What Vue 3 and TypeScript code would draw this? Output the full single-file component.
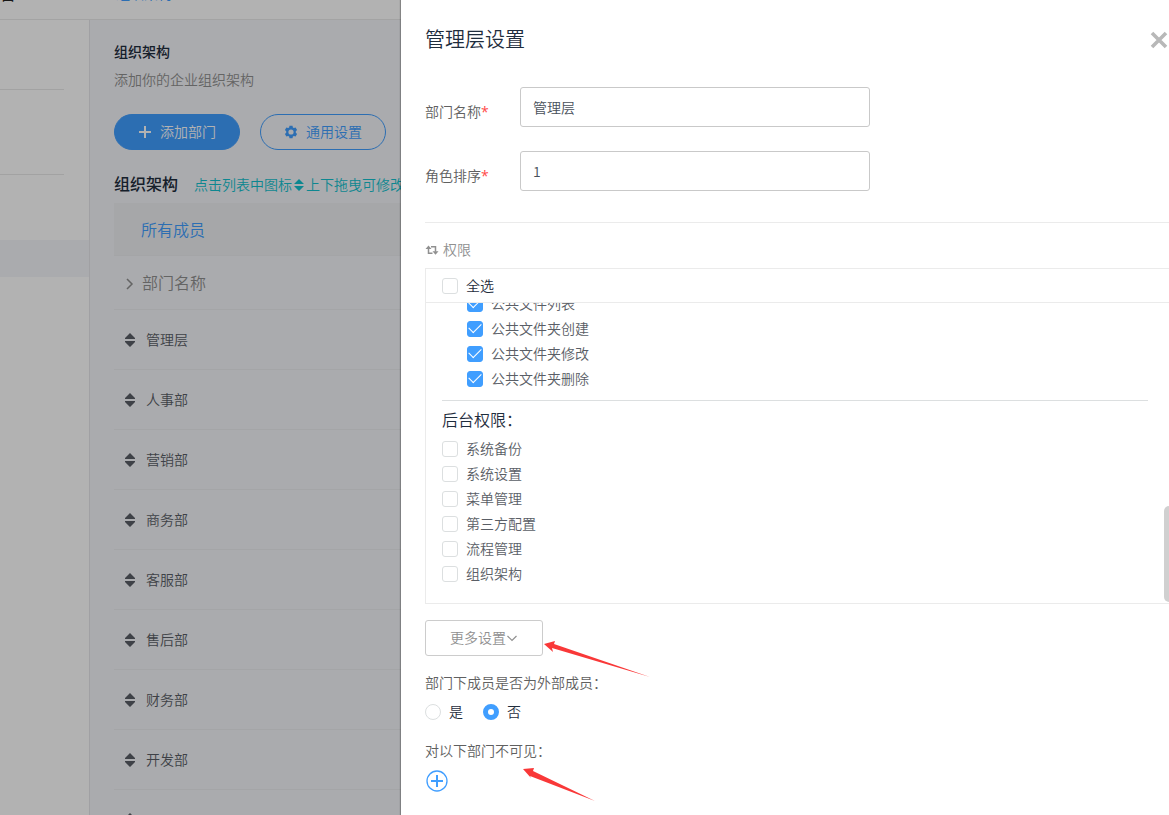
<script setup lang="ts">
import { ref } from 'vue'

interface Permission { name: string; checked: boolean }

const departments = ['管理层', '人事部', '营销部', '商务部', '客服部', '售后部', '财务部', '开发部', '']
const deptName = ref('管理层')
const order = ref('1')
const all = ref(false)
const external = ref('否')
const filePermissions = ref<Permission[]>(
  ['公共文件列表', '公共文件夹创建', '公共文件夹修改', '公共文件夹删除'].map((name) => ({ name, checked: true })),
)
const adminPermissions = ref<Permission[]>(
  ['系统备份', '系统设置', '菜单管理', '第三方配置', '流程管理', '组织架构'].map((name) => ({ name, checked: false })),
)
</script>

<template>
  <div class="app">
    <div class="page">
      <header class="topbar">
        <span class="brand">台</span>
        <a class="tab" href="#">组织架构</a>
      </header>
      <div class="body">
        <nav class="side" aria-label="菜单">
          <div class="side-block first"></div>
          <div class="side-block"></div>
          <div class="side-active"></div>
        </nav>
        <main class="main">
          <h1>组织架构</h1>
          <p class="sub">添加你的企业组织架构</p>
          <div class="actions">
            <button class="pill solid" type="button">
              <svg width="14" height="14" viewBox="0 0 14 14"><path d="M7 1v12M1 7h12" stroke="currentColor" stroke-width="2" fill="none" /></svg>
              添加部门
            </button>
            <button class="pill" type="button">
              <svg width="14" height="14" viewBox="0 0 14 14"><path fill="currentColor" fill-rule="evenodd" d="M5.500 .8h3l.4 1.700 1 .6 1.700-.6 1.500 2.600-1.300 1.200v1.400l1.300 1.200-1.500 2.600-1.700-.6-1 .6-.4 1.700h-3l-.4-1.700-1-.6-1.700.6L.9 8.900l1.300-1.200V6.300L.9 5.100l1.500-2.600 1.700.6 1-.6zM7 4.400a2.600 2.600 0 1 0 0 5.200a2.600 2.600 0 0 0 0-5.200z" /></svg>
              通用设置
            </button>
          </div>
          <div class="list-title">
            <h2>组织架构</h2>
            <span class="hint">点击列表中图标<svg class="sort" width="12" height="14" viewBox="0 0 12 14"><path d="M6 1l5 5H1zM6 13l5-5H1z" fill="currentColor" /></svg>上下拖曳可修改</span>
          </div>
          <div class="members"><a href="#">所有成员</a></div>
          <div class="list-head">
            <svg width="10" height="14" viewBox="0 0 10 14"><path d="M2 2l5 5-5 5" stroke="currentColor" stroke-width="1.500" fill="none" /></svg>
            部门名称
          </div>
          <ul class="depts">
            <li v-for="(d, i) in departments" :key="i">
              <svg width="12" height="14" viewBox="0 0 12 14"><path d="M6 0l5 5v1H1V5zM6 14l5-5V8H1v1z" fill="currentColor" /></svg>
              {{ d }}
            </li>
          </ul>
        </main>
      </div>
    </div>
    <div class="mask"></div>

    <aside class="drawer">
      <div class="drawer-head">
        <h2>管理层设置</h2>
        <button class="close" type="button" aria-label="关闭">
          <svg width="18" height="18" viewBox="0 0 18 18"><path d="M2 2l14 14M16 2L2 16" stroke="currentColor" stroke-width="3.600" fill="none" /></svg>
        </button>
      </div>
      <div class="field">
        <label for="name">部门名称<i>*</i></label>
        <input id="name" v-model="deptName" type="text" />
      </div>
      <div class="field">
        <label for="order">角色排序<i>*</i></label>
        <input id="order" v-model="order" type="text" />
      </div>
      <div class="section">
        <svg width="14" height="12" viewBox="0 0 14 12"><path d="M3.500 3v6.200H7.500M6 2.800h4.500v5" stroke="currentColor" stroke-width="1.500" fill="none" /><path d="M.5 5l3-3.500 3 3.500zM7.500 7.200h6l-3 3.500z" fill="currentColor" /></svg>
        权限
      </div>
      <div class="perm">
        <label class="all"><input v-model="all" type="checkbox" />全选</label>
        <div class="perm-view">
          <div class="perm-scroll">
            <div class="group nested">
              <label v-for="p in filePermissions" :key="p.name"><input v-model="p.checked" type="checkbox" />{{ p.name }}</label>
            </div>
            <div class="group admin">
              <h3>后台权限：</h3>
              <label v-for="p in adminPermissions" :key="p.name"><input v-model="p.checked" type="checkbox" />{{ p.name }}</label>
            </div>
          </div>
          <div class="thumb"></div>
        </div>
      </div>
      <div class="anchor more-row">
        <button class="more" type="button">
          更多设置
          <svg width="12" height="12" viewBox="0 0 12 12"><path d="M1.500 4L6 8.500 10.500 4" stroke="currentColor" stroke-width="1.200" fill="none" /></svg>
        </button>
        <svg class="arrow arrow-more" width="106" height="38" viewBox="0 0 106 38"><path d="M0 5L11 2 10 5 106 38 8 9 9 13z" fill="#f93838" /></svg>
      </div>
      <fieldset>
        <legend>部门下成员是否为外部成员：</legend>
        <div class="radios">
          <label><input v-model="external" type="radio" name="external" value="是" />是</label>
          <label><input v-model="external" type="radio" name="external" value="否" />否</label>
        </div>
      </fieldset>
      <div class="anchor">
        <p class="hidden-label">对以下部门不可见：</p>
        <button class="add" type="button" aria-label="添加部门">
          <svg width="22" height="22" viewBox="0 0 22 22"><circle cx="11" cy="11" r="10" stroke="currentColor" stroke-width="1.300" fill="none" /><path d="M11 5v12M5 11h12" stroke="currentColor" stroke-width="2" fill="none" /></svg>
        </button>
        <svg class="arrow arrow-hidden" width="74" height="34" viewBox="0 0 74 34"><path d="M0 1L11 0 10 3 72 33 7 8 8 10z" fill="#f93838" /></svg>
      </div>
    </aside>
  </div>
</template>

<style>
body { overflow: hidden; }
</style>

<style scoped>
* { box-sizing: border-box; }
.app {
  position: relative;
  height: 100vh;
  overflow: hidden;
  font: 14px/20px "Liberation Sans", "Noto Sans CJK SC", sans-serif;
  font-weight: 350;
  color: #5a5e66;
  background: #fff;
}
h1, h2, h3, p, ul { margin: 0; padding: 0; font-weight: inherit; }
button { font: inherit; cursor: pointer; }
a { color: #409eff; text-decoration: none; }
svg { flex: none; display: block; }
.page { height: 100%; display: flex; flex-direction: column; overflow: hidden; }
.topbar {
  height: 20px;
  flex: none;
  display: flex;
  align-items: flex-start;
  gap: 98px;
  border-bottom: 1px solid #eaeaea;
  overflow: hidden;
}
.topbar > * { margin-top: -15px; }
.topbar .tab { margin-top: -16px; font-weight: 400; }
.brand { width: 18px; font-size: 16px; color: #222; font-weight: 400; }
.body { flex: 1; display: grid; grid-template-columns: 90px 1fr; min-height: 0; }
.side { border-right: 1px solid #e6e6ea; }
.side-block { width: 64px; height: 85px; border-bottom: 1px solid #e8e8e8; }
.side-block.first { height: 70px; }
.side-active { margin-top: 65px; height: 37px; background: #f4f5f9; }
.main { background: #f4f5f9; padding: 22px 0 0 24px; white-space: nowrap; overflow: hidden; }
.main h1 { font-size: 14px; line-height: 20px; font-weight: 500; color: #1f2d3d; }
.sub { margin-top: 8px; color: #909090; }
.actions { display: flex; gap: 20px; margin-top: 24px; }
.pill {
  width: 126px;
  height: 36px;
  border: 1px solid #409eff;
  border-radius: 18px;
  background: transparent;
  color: #409eff;
  display: flex;
  align-items: center;
  justify-content: center;
  gap: 8px;
  padding: 0;
}
.pill.solid { background: #409eff; color: #fff; }
.list-title { display: flex; gap: 16px; margin-top: 22px; align-items: center; line-height: 24px; }
.list-title h2 { font-size: 16px; color: #1f2d3d; font-weight: 500; }
.hint { color: #13c2cf; display: flex; align-items: center; padding-top: 1px; }
.sort { margin: 0 1px; }
.members {
  height: 53px;
  margin-top: 6px;
  padding-left: 27px;
  line-height: 56px;
  font-size: 16px;
  background: #eeeff2;
  border-bottom: 1px solid #ebecf0;
}
.list-head {
  height: 54px;
  padding: 2px 0 0 11px;
  display: flex;
  align-items: center;
  gap: 7px;
  font-size: 16px;
  color: #909090;
  border-bottom: 1px solid #ebecf0;
}
.depts { list-style: none; }
.depts li {
  height: 60px;
  padding-left: 10px;
  display: flex;
  align-items: center;
  gap: 10px;
  border-bottom: 1px solid #ebecf0;
}
.mask { position: absolute; inset: 0; background: rgba(0, 0, 0, 0.3); }

.drawer {
  position: absolute;
  top: 0;
  right: 0;
  bottom: 0;
  left: 401px;
  padding: 24px 0 0 24px;
  background: #fff;
  box-shadow: 0 0 1px 1px rgba(0, 0, 0, 0.25);
  overflow: hidden;
}
.drawer-head { display: flex; justify-content: space-between; align-items: center; height: 32px; color: #1f2d3d; }
.drawer-head h2 { font-size: 20px; line-height: 30px; }
.close { border: 0; padding: 0; margin-right: 1px; background: none; color: #b8b8b8; }
.field { display: flex; margin-top: 24px; }
.drawer-head + .field { margin-top: 31px; }
.field label { width: 95px; padding-top: 15px; color: #606060; }
.field i { color: #ff4949; font-family: "Open Sans", sans-serif; font-style: normal; font-weight: 400; line-height: 16px; }
.field input {
  width: 350px;
  height: 40px;
  padding: 0 12px;
  border: 1px solid #c9c9c9;
  border-radius: 3px;
  font: inherit;
  font-family: "Noto Sans CJK SC", sans-serif;
  color: #48505a;
  outline: 0;
}
.section {
  margin-top: 31px;
  border-top: 1px solid #ebebeb;
  padding: 17px 0 8px;
  display: flex;
  align-items: center;
  gap: 4px;
  color: #909090;
}
.perm { border: 1px solid #ebebeb; border-right: 0; }
.perm label { display: flex; align-items: center; gap: 8px; }
input[type="checkbox"], input[type="radio"] {
  appearance: none;
  flex: none;
  width: 16px;
  height: 16px;
  margin: 0;
  border: 1px solid #dcdfe0;
  border-radius: 3px;
  background: #fff;
  display: grid;
  place-items: center;
}
input[type="checkbox"]:checked { background: #409eff; border-color: #409eff; }
input[type="checkbox"]:checked::after {
  content: "";
  width: 11px;
  height: 6px;
  border: solid #fff;
  border-width: 0 0 1px 1px;
  transform: translateY(-2px) rotate(-45deg);
}
input[type="radio"] { border-radius: 50%; }
input[type="radio"]:checked { border: 5px solid #409eff; }
.perm .all { height: 33px; padding-left: 16px; color: #1f2d3d; }
.perm-view {
  position: relative;
  display: flex;
  flex-direction: column;
  justify-content: flex-end;
  height: 301px;
  overflow: hidden;
  border-top: 1px solid #ebebeb;
}
.perm-scroll { padding: 0 21px 17px 16px; }
.group label { height: 25px; }
.nested { padding: 0 0 9px 25px; border-bottom: 1px solid #dcdfe0; }
.admin h3 { padding-top: 4px; font-size: 16px; line-height: 31px; color: #1f2d3d; }
.thumb { position: absolute; right: 0; bottom: 1px; width: 5px; height: 96px; border-radius: 5px 0 0 5px; background: #d0d0d0; }
.anchor { position: relative; }
.more-row { margin-top: 16px; }
.more {
  width: 118px;
  height: 36px;
  padding: 0;
  border: 1px solid #ccc;
  border-radius: 3px;
  background: #fff;
  color: #909090;
  display: flex;
  align-items: center;
  justify-content: center;
}
.arrow { position: absolute; }
.arrow-more { left: 119px; top: 19px; }
.arrow-hidden { left: 98px; top: 27px; }
fieldset { border: 0; margin: 17px 0 0; padding: 0; }
legend { padding: 0; color: #606060; }
.radios { display: flex; gap: 20px; margin-top: 9px; color: #1f2d3d; }
.radios label { display: flex; gap: 8px; align-items: center; }
.hidden-label { margin-top: 19px; color: #606060; }
.add { display: block; border: 0; background: none; padding: 0; margin: 9px 0 0 1px; color: #409eff; }
</style>
